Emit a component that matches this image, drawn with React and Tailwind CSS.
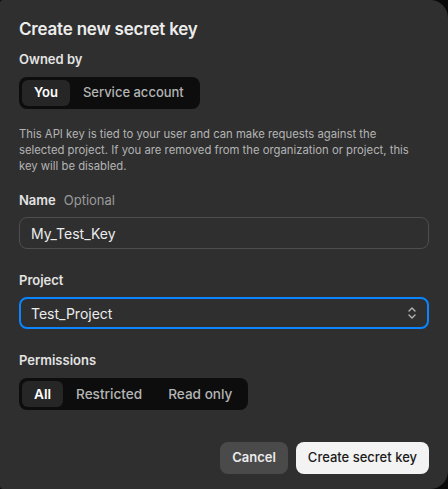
import { useState } from "react";

const ff = { fontFamily: "Inter, 'Noto Sans', sans-serif" };

function Segmented({ options, value, onChange, wide }) {
  const size = wide ? "text-[13.6px]" : "text-[13px]";
  return (
    <div className="inline-flex items-center rounded-lg bg-[#0d0d0d] p-[3px]">
      {options.map((opt) => (
        <button
          key={opt}
          onClick={() => onChange(opt)}
          className={
            opt === value
              ? `h-[26px] rounded-md bg-[#262626] px-[12px] ${size} font-semibold text-white`
              : `h-[26px] rounded-md px-[13px] ${size} font-medium text-[#b4b4b4]`
          }
        >
          {opt}
        </button>
      ))}
    </div>
  );
}

export default function App() {
  const [owner, setOwner] = useState("You");
  const [perm, setPerm] = useState("All");
  const [name, setName] = useState("My_Test_Key");

  return (
    <div className="h-[489px] w-[448px] bg-[#0a0a0a]" style={ff}>
      <div className="flex h-full w-full flex-col rounded-tl-[3px] rounded-bl-[3px] rounded-tr-[18px] rounded-br-[18px] bg-[#2f2f2f] px-[19px] pt-[17px] text-white">
        <h2 className="text-[17px] font-semibold leading-[25px] tracking-[-0.2px] text-[#ececec]">
          Create new secret key
        </h2>

        <div className="mt-[8px] text-[13px] font-semibold leading-[18px] text-[#e3e3e3]">Owned by</div>
        <div className="mt-[9px]">
          <Segmented options={["You", "Service account"]} value={owner} onChange={setOwner} />
        </div>

        <p className="mt-[17px] max-w-[400px] text-[11.3px] leading-[16px] text-[#b4b4b4]">
          This API key is tied to your user and can make requests against the
          selected project. If you are removed from the organization or project, this
          key will be disabled.
        </p>

        <div className="mt-[17px] flex items-baseline gap-[8px] text-[13px] leading-[18px]">
          <span className="font-semibold text-[#e3e3e3]">Name</span>
          <span className="text-[#9b9b9b]">Optional</span>
        </div>
        <input
          value={name}
          onChange={(e) => setName(e.target.value)}
          className="mt-[8px] h-[32px] w-full rounded-lg border border-[#4e4e4e] bg-transparent px-[11px] text-[14px] text-[#ececec] outline-none"
        />

        <div className="mt-[22px] text-[13px] font-semibold leading-[18px] text-[#e3e3e3]">Project</div>
        <div className="mt-[8px] flex h-[32px] w-full items-center justify-between rounded-lg border-2 border-[#0a84ff] px-[10px]">
          <span className="text-[14px] text-[#ececec]">Test_Project</span>
          <svg width="10" height="14" viewBox="0 0 10 14" fill="none" stroke="#b4b4b4" strokeWidth="1.4" strokeLinecap="round" strokeLinejoin="round">
            <path d="M2 5l3-3 3 3" />
            <path d="M2 9l3 3 3-3" />
          </svg>
        </div>

        <div className="mt-[22px] text-[13px] font-semibold leading-[18px] text-[#e3e3e3]">Permissions</div>
        <div className="mt-[9px]">
          <Segmented options={["All", "Restricted", "Read only"]} value={perm} onChange={setPerm} wide />
        </div>

        <div className="mt-auto mb-[15px] flex justify-end gap-[8px]">
          <button className="h-[32px] rounded-lg bg-[#4a4a4a] px-[12px] text-[13px] font-semibold text-[#ececec]">
            Cancel
          </button>
          <button className="h-[32px] rounded-lg bg-[#f3f3f3] px-[12px] text-[13px] font-medium text-[#1a1a1a]">
            Create secret key
          </button>
        </div>
      </div>
    </div>
  );
}
